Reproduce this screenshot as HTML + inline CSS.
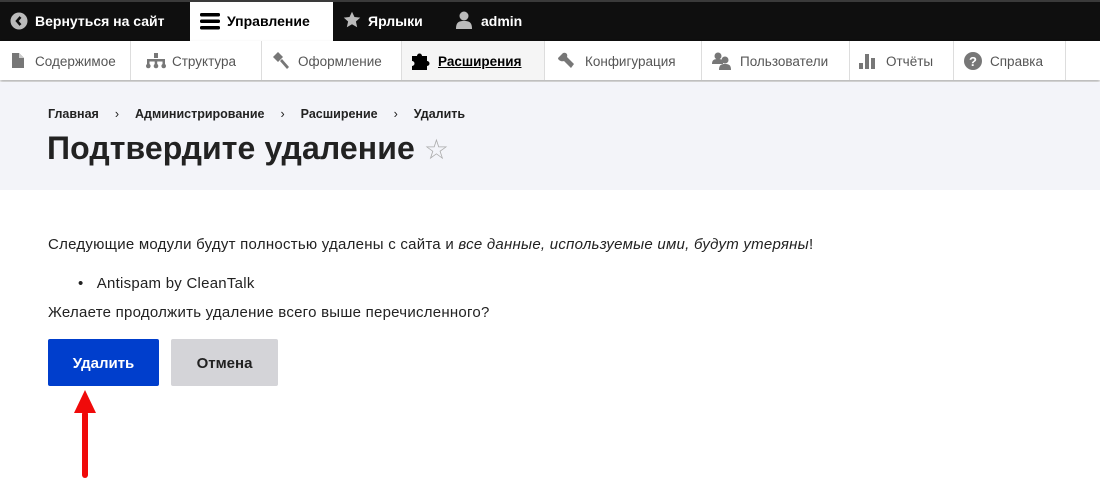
<!DOCTYPE html>
<html><head><meta charset="utf-8"><style>
*{margin:0;padding:0;box-sizing:border-box}
body{width:1100px;height:500px;overflow:hidden;background:#fff;font-family:"Liberation Sans","DejaVu Sans",sans-serif;position:relative}
.top{position:absolute;left:0;top:0;width:1100px;height:41px;background:#0f0f0f;border-top:2px solid #3a3a3a}
.ti{position:absolute;top:0;height:39px;line-height:39px;color:#fff;font-weight:bold;font-size:14px;white-space:nowrap}
.tray{position:absolute;left:0;top:41px;width:1100px;height:39px;background:#fff;box-shadow:0 2px 3px rgba(0,0,0,.3)}
.tab{position:absolute;top:0;height:39px;line-height:41px;font-size:13.5px;color:#555;border-right:1px solid #ddd;white-space:nowrap}
.hdr{position:absolute;left:0;top:82px;width:1100px;height:108px;background:#f3f4f9}
.bc{position:absolute;top:107px;left:48px;font-size:12.5px;font-weight:bold;color:#222}
h1{position:absolute;top:130px;left:47px;font-size:32px;color:#222;font-weight:bold;letter-spacing:0.1px}
.p{position:absolute;left:48px;font-size:15px;color:#222;letter-spacing:0.25px;white-space:nowrap}
.btn{position:absolute;top:339px;height:47px;line-height:50px;text-align:center;font-weight:bold;font-size:15px;border-radius:2px}
</style></head><body>
<div class="top">
 <div class="ti" style="left:10px"><svg width="18" height="18" viewBox="0 0 18 18" style="vertical-align:-4px;margin-right:7px"><circle cx="9" cy="9" r="8.5" fill="#bbb"/><path d="M10.5 5 L7 9 L10.5 13" stroke="#0f0f0f" stroke-width="2.5" fill="none"/></svg>Вернуться на сайт</div>
 <div class="ti" style="left:190px;width:143px;background:#fff;color:#000;padding-left:10px;height:39px"><svg width="20" height="18" viewBox="0 0 20 18" style="vertical-align:-4px;margin-right:7px"><rect y="1" width="20" height="3.5" rx="1.5"/><rect y="7.5" width="20" height="3.5" rx="1.5"/><rect y="14" width="20" height="3.5" rx="1.5"/></svg>Управление</div>
 <div class="ti" style="left:343px"><svg width="18" height="18" viewBox="0 0 24 24" style="vertical-align:-3px;margin-right:7px"><path d="M12 1l3.3 7 7.7.8-5.8 5.2 1.7 7.6L12 17.7 5.1 21.6l1.7-7.6L1 8.8 8.7 8z" fill="#bbb"/></svg>Ярлыки</div>
 <div class="ti" style="left:456px"><svg width="16" height="18" viewBox="0 0 16 18" style="vertical-align:-3px;margin-right:9px"><circle cx="8" cy="5" r="4.5" fill="#bbb"/><path d="M0 18 C0 11 3 10 8 10 C13 10 16 11 16 18z" fill="#bbb"/></svg>admin</div>
</div>
<div class="tray">
 <div class="tab" style="left:0;width:131px;padding-left:12px"><svg width="12" height="15" viewBox="0 0 12 15" style="vertical-align:-2px;margin-right:11px"><path d="M0 0h7l5 5v10H0z" fill="#777"/><path d="M7 0v5h5" fill="#ccc"/></svg>Содержимое</div>
 <div class="tab" style="left:131px;width:131px;padding-left:15px"><svg width="20" height="16" viewBox="0 0 20 16" style="vertical-align:-3px;margin-right:6px" fill="#777"><rect x="8" y="0" width="4" height="5"/><rect x="2" y="6" width="16" height="2.5"/><rect x="1" y="6" width="2.5" height="6"/><rect x="8.7" y="6" width="2.5" height="6"/><rect x="16.5" y="6" width="2.5" height="6"/><circle cx="2.3" cy="13" r="2.3"/><circle cx="10" cy="13" r="2.3"/><circle cx="17.7" cy="13" r="2.3"/></svg>Структура</div>
 <div class="tab" style="left:262px;width:140px;padding-left:10px"><svg width="18" height="18" viewBox="0 0 18 18" style="vertical-align:-4px;margin-right:8px" fill="#777"><path d="M1 5 L6 0 L11 5 L6 10z"/><path d="M8 9 L10 7 L17 15 L15 17z"/></svg>Оформление</div>
 <div class="tab" style="left:402px;width:143px;padding-left:10px;background:#f5f5f5;color:#000;font-weight:bold;text-decoration:underline"><svg width="20" height="18" viewBox="0 0 20 18" style="vertical-align:-4px;margin-right:6px" fill="#000"><path d="M0 4h5a2.5 2.5 0 1 1 5 0h5v5a2.5 2.5 0 1 1 0 5v4H0v-4a2.5 2.5 0 1 0 0-5z"/></svg>Расширения</div>
 <div class="tab" style="left:545px;width:157px;padding-left:12px"><svg width="18" height="18" viewBox="0 0 18 18" style="vertical-align:-4px;margin-right:10px" fill="#777"><path d="M1 6 L6 1 C9 0 11 2 10 5 L17 12 L14 16 L7 9 C4 10 1 8 1 6z"/></svg>Конфигурация</div>
 <div class="tab" style="left:702px;width:148px;padding-left:10px"><svg width="20" height="18" viewBox="0 0 20 18" style="vertical-align:-4px;margin-right:8px" fill="#777"><circle cx="6" cy="4" r="3.5"/><path d="M0 12c0-4 2-5 6-5s5 1 5 5z"/><circle cx="13" cy="8" r="3.5"/><path d="M7 18c0-5 2-6 6-6s6 1 6 6z"/></svg>Пользователи</div>
 <div class="tab" style="left:850px;width:104px;padding-left:8px"><svg width="20" height="18" viewBox="0 0 20 18" style="vertical-align:-4px;margin-right:8px" fill="#777"><rect x="1" y="11" width="4" height="6"/><rect x="7" y="2" width="4" height="15"/><rect x="13" y="6" width="4" height="11"/></svg>Отчёты</div>
 <div class="tab" style="left:954px;width:112px;padding-left:10px"><svg width="18" height="18" viewBox="0 0 18 18" style="vertical-align:-4px;margin-right:8px"><circle cx="9" cy="9" r="9" fill="#777"/><text x="9" y="14" text-anchor="middle" font-size="13" font-weight="bold" fill="#fff" font-family="Liberation Sans">?</text></svg>Справка</div>
</div>
<div class="hdr"></div>
<div class="bc">Главная<span style="margin:0 16px;font-weight:normal">›</span>Администрирование<span style="margin:0 16px;font-weight:normal">›</span>Расширение<span style="margin:0 16px;font-weight:normal">›</span>Удалить</div>
<h1>Подтвердите удаление <span style="color:#aaa;font-weight:normal;font-size:28px">☆</span></h1>
<div class="p" style="top:236px">Следующие модули будут полностью удалены с сайта и <i>все данные, используемые ими, будут утеряны</i>!</div>
<div class="p" style="top:275px;left:78px">•&nbsp;&nbsp;&nbsp;Antispam by CleanTalk</div>
<div class="p" style="top:304px">Желаете продолжить удаление всего выше перечисленного?</div>
<div class="btn" style="left:48px;width:111px;background:#003ecc;color:#fff">Удалить</div>
<div class="btn" style="left:171px;width:107px;background:#d4d4d8;color:#222">Отмена</div>
<svg style="position:absolute;left:60px;top:385px" width="50" height="100"><path d="M25 5 L36 28 L14 28z" fill="#f00a0a"/><rect x="22" y="26" width="6" height="67" rx="3" fill="#f00a0a"/></svg>
</body></html>
